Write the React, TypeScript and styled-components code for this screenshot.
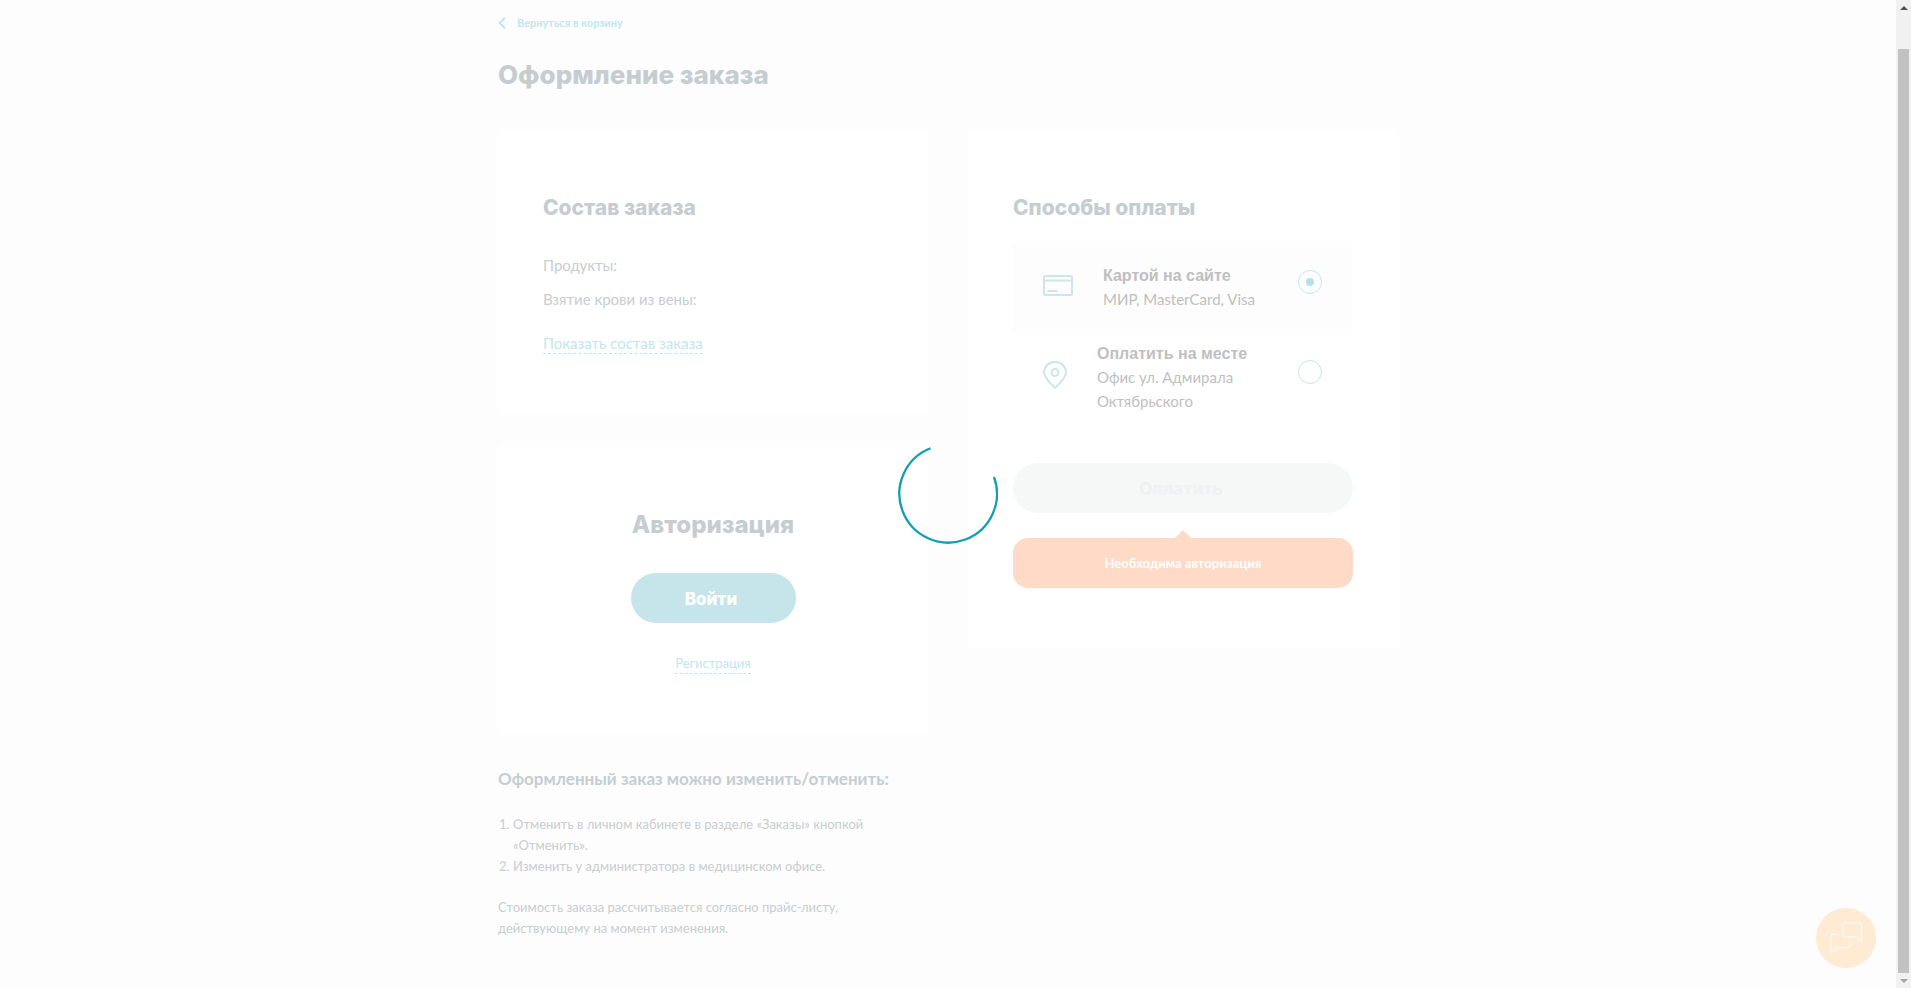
import React, { useState } from 'react';
import styled, { createGlobalStyle, css } from 'styled-components';

const color = {
  page: '#fdfdfd',
  card: '#ffffff',
  heading: '#c5cdd1',
  text: '#c8cdcf',
  method: '#bfbfbf',
  link: '#bfe7ee',
  icon: '#cde6ec',
  primary: '#c5e5ea',
  disabled: '#f6f8f7',
  disabledText: '#eff1f2',
  alert: '#ffdac6',
  chat: '#ffebd3',
  spinner: '#119fb1',
};

const bodyFont = `Lato, "Noto Sans", sans-serif`;
const headingFont = `Inter, "Noto Sans", sans-serif`;

const GlobalStyle = createGlobalStyle`
  *, *::before, *::after { box-sizing: border-box; }
  body {
    margin: 0;
    background: ${color.page};
    color: ${color.text};
    font: 400 15px/24px ${bodyFont};
  }
  h1, h2, h3, p, ol { margin: 0; padding: 0; }
`;

const Shell = styled.div`
  display: grid;
  grid-template-columns: minmax(0, 1fr) 15px;
`;

const Page = styled.main`
  width: 100%;
  max-width: 900px;
  min-height: 100vh;
  margin: 0 auto;
  padding: 13px 0 48px;
`;

const BackLink = styled.a`
  display: flex;
  align-items: center;
  gap: 11px;
  width: fit-content;
  color: ${color.link};
  font-size: 11px;
  font-weight: 700;
  line-height: 20px;
  text-decoration: none;
`;

const PageTitle = styled.h1`
  margin: 22px 0 35px;
  color: ${color.heading};
  font: 800 26px/40px ${headingFont};
`;

const Columns = styled.div`
  display: grid;
  grid-template-columns: repeat(auto-fit, minmax(380px, 1fr));
  gap: 40px;
  align-items: start;
`;

const Column = styled.div`
  display: flex;
  flex-direction: column;
  gap: 31px;
`;

const Card = styled.section<{ $centered?: boolean }>`
  display: flex;
  flex-direction: column;
  align-items: ${(p) => (p.$centered ? 'center' : 'stretch')};
  padding: 60px 45px;
  background: ${color.card};
`;

const CardTitle = styled.h2<{ $large?: boolean }>`
  color: ${color.heading};
  font-family: ${headingFont};
  font-weight: 800;
  font-size: ${(p) => (p.$large ? 24 : 21)}px;
  line-height: ${(p) => (p.$large ? 40 : 36)}px;
`;

const Totals = styled.div`
  display: flex;
  flex-direction: column;
  gap: 10px;
  margin: 27px 0 22px;
`;

const DashedLink = styled.a<{ $small?: boolean }>`
  align-self: ${(p) => (p.$small ? 'center' : 'flex-start')};
  border-bottom: 1px dashed currentColor;
  color: ${color.link};
  font-size: ${(p) => (p.$small ? 13 : 15)}px;
  line-height: 20px;
  text-decoration: none;
`;

const Button = styled.button<{ $wide?: boolean }>`
  width: ${(p) => (p.$wide ? '100%' : '165px')};
  height: 50px;
  padding: 2px 4px 0 0;
  border: 0;
  border-radius: 25px;
  background: ${color.primary};
  color: #fff;
  font: 800 17px/24px ${headingFont};
  ${(p) =>
    p.$wide
      ? css`margin: 40px 0 25px;`
      : css`margin: 28px 0 30px;`}
  &:disabled {
    background: ${color.disabled};
    color: ${color.disabledText};
  }
`;

const Methods = styled.div`
  display: flex;
  flex-direction: column;
  margin-top: 17px;
`;

const Method = styled.label<{ $active: boolean }>`
  display: flex;
  align-items: center;
  gap: 30px;
  min-height: 90px;
  padding: 0 31px 0 30px;
  background: ${(p) => (p.$active ? color.page : 'transparent')};
  color: ${color.method};
  & + & { border-bottom: 1px solid ${color.page}; }
  svg { flex: none; margin-bottom: 6px; }
`;

const MethodText = styled.span`
  flex: 1;
  max-width: 170px;
`;

const MethodName = styled.strong`
  display: block;
  font: 700 16px/22px "Liberation Sans", Arial, sans-serif;
`;

const Radio = styled.input`
  appearance: none;
  display: grid;
  place-items: center;
  flex: none;
  width: 24px;
  height: 24px;
  margin: 0 0 12px auto;
  border: 1px solid ${color.link};
  border-radius: 50%;
  background: #fff;
  &:checked::before {
    content: '';
    width: 8px;
    height: 8px;
    border-radius: 50%;
    background: #b5e2ea;
  }
`;

const Alert = styled.div`
  position: relative;
  padding: 15px;
  border-radius: 15px;
  background: ${color.alert};
  color: #fff;
  font-size: 13px;
  font-weight: 700;
  line-height: 20px;
  text-align: center;
  &::before {
    content: '';
    position: absolute;
    bottom: 100%;
    left: 50%;
    margin-left: -8px;
    border: 8px solid transparent;
    border-top-width: 0;
    border-bottom-color: ${color.alert};
  }
`;

const Notes = styled.section`
  font-size: 13px;
  line-height: 21px;
`;

const NotesTitle = styled.h3`
  color: ${color.heading};
  font-size: 17px;
  font-weight: 700;
  line-height: 28px;
`;

const Steps = styled.ol`
  && {
    margin: 21px 0 20px;
    padding-left: 15px;
  }
`;

const Spinner = styled.svg`
  position: fixed;
  top: 50%;
  left: calc(50% - 8px);
  width: 100px;
  height: 100px;
  margin: -50px 0 0 -50px;
`;

const ChatButton = styled.button`
  position: fixed;
  right: 35px;
  bottom: 20px;
  width: 60px;
  height: 60px;
  padding: 0;
  border: 0;
  border-radius: 50%;
  background: ${color.chat};
  svg { display: block; }
`;

const ScrollTrack = styled.aside`
  position: sticky;
  top: 0;
  display: flex;
  flex-direction: column;
  height: 100vh;
  padding: 0 2px;
  background: #f1f1f1;
`;

const ScrollArrow = styled.span<{ $down?: boolean }>`
  display: grid;
  place-items: center;
  height: 15px;
  &::before {
    content: '';
    border: 4px solid transparent;
    ${(p) =>
      p.$down
        ? css`border-bottom-width: 0; border-top-color: #a3a3a3;`
        : css`border-top-width: 0; border-bottom-color: #505050;`}
  }
`;

const ScrollThumb = styled.span`
  flex: 1;
  margin-top: 34px;
  background: #c1c1c1;
`;

const ChevronIcon = () => (
  <svg width="8" height="12" viewBox="0 0 8 12" fill="none" stroke={color.link} strokeWidth="2" aria-hidden="true">
    <path d="M7 .7 1.6 6 7 11.3" />
  </svg>
);

const CardIcon = () => (
  <svg width="30" height="21" viewBox="0 0 30 21" fill="none" stroke={color.icon} strokeWidth="2" strokeLinecap="round" aria-hidden="true">
    <rect x="1" y="1" width="28" height="19" rx="1.5" />
    <path d="M1 5.500h28M5 16h9" />
  </svg>
);

const PinIcon = () => (
  <svg width="24" height="28" viewBox="0 0 24 28" fill="none" stroke={color.icon} strokeWidth="2" strokeLinejoin="round" aria-hidden="true">
    <path d="M12 27C8 22.600 1 17 1 11.400a11 10.400 0 0 1 22 0C23 17 16 22.600 12 27Z" />
    <circle cx="12" cy="11.500" r="3.500" />
  </svg>
);

const ChatIcon = () => (
  <svg width="60" height="60" viewBox="0 0 60 60" fill="none" stroke="#fff8ef" strokeWidth="1.500" strokeLinejoin="round" strokeLinecap="round" aria-hidden="true">
    <path d="M29 14.700h14.500q2 0 2 2V34l-6-5.300H29q-2 0-2-2v-10q0-2 2-2Z" />
    <path d="M21.500 26.300H17q-2 0-2 2V45l6-5.200h11q2 0 2-2V34.500" />
  </svg>
);

const methods = [
  { id: 'card', name: 'Картой на сайте', note: 'МИР, MasterCard, Visa', icon: <CardIcon /> },
  { id: 'office', name: 'Оплатить на месте', note: 'Офис ул. Адмирала Октябрьского', icon: <PinIcon /> },
];

export default function App() {
  const [method, setMethod] = useState('card');

  return (
    <>
      <GlobalStyle />
      <Shell>
        <Page>
          <BackLink href="#cart">
            <ChevronIcon />
            Вернуться в корзину
          </BackLink>
          <PageTitle>Оформление заказа</PageTitle>
          <Columns>
            <Column>
              <Card>
                <CardTitle>Состав заказа</CardTitle>
                <Totals>
                  <p>Продукты:</p>
                  <p>Взятие крови из вены:</p>
                </Totals>
                <DashedLink href="#items">Показать состав заказа</DashedLink>
              </Card>
              <Card $centered>
                <CardTitle $large>Авторизация</CardTitle>
                <Button type="button">Войти</Button>
                <DashedLink $small href="#register">Регистрация</DashedLink>
              </Card>
              <Notes>
                <NotesTitle>Оформленный заказ можно изменить/отменить:</NotesTitle>
                <Steps>
                  <li>Отменить в личном кабинете в разделе «Заказы» кнопкой «Отменить».</li>
                  <li>Изменить у администратора в медицинском офисе.</li>
                </Steps>
                <p>Стоимость заказа рассчитывается согласно прайс-листу, действующему на момент изменения.</p>
              </Notes>
            </Column>
            <Card>
              <CardTitle>Способы оплаты</CardTitle>
              <Methods role="radiogroup" aria-label="Способы оплаты">
                {methods.map((m) => (
                  <Method key={m.id} $active={method === m.id}>
                    {m.icon}
                    <MethodText>
                      <MethodName>{m.name}</MethodName>
                      {m.note}
                    </MethodText>
                    <Radio
                      type="radio"
                      name="method"
                      value={m.id}
                      checked={method === m.id}
                      onChange={() => setMethod(m.id)}
                    />
                  </Method>
                ))}
              </Methods>
              <Button $wide type="button" disabled>Оплатить</Button>
              <Alert role="alert">Необходима авторизация</Alert>
            </Card>
          </Columns>
        </Page>
        <ScrollTrack aria-hidden="true">
          <ScrollArrow />
          <ScrollThumb />
          <ScrollArrow $down />
        </ScrollTrack>
      </Shell>
      <ChatButton type="button" aria-label="Чат">
        <ChatIcon />
      </ChatButton>
      <Spinner viewBox="0 0 100 100" fill="none" stroke={color.spinner} strokeWidth="2.300" aria-hidden="true">
        <path d="M32.500 4.300A48.800 48.800 0 1 0 96 33" />
      </Spinner>
    </>
  );
}
